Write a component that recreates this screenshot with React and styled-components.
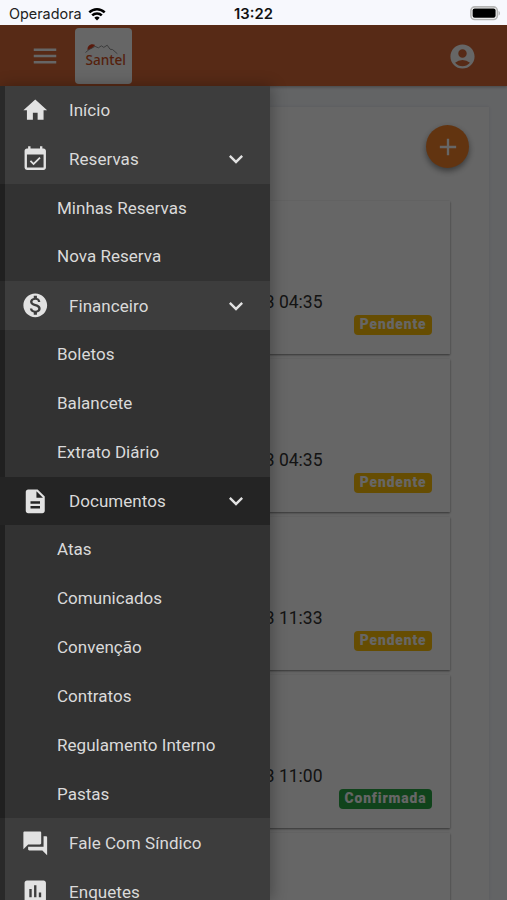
import {Fragment, useState} from "react";
import styled, {createGlobalStyle} from "styled-components";
import {
    MdAccountCircle,
    MdAdd,
    MdAssessment,
    MdDescription,
    MdEventAvailable,
    MdExpandMore,
    MdForum,
    MdHome,
    MdMenu,
    MdMonetizationOn,
} from "react-icons/md";

const menu = [
    {label: "Início", icon: MdHome},
    {label: "Reservas", icon: MdEventAvailable, children: ["Minhas Reservas", "Nova Reserva"]},
    {label: "Financeiro", icon: MdMonetizationOn, children: ["Boletos", "Balancete", "Extrato Diário"]},
    {
        label: "Documentos",
        icon: MdDescription,
        children: ["Atas", "Comunicados", "Convenção", "Contratos", "Regulamento Interno", "Pastas"],
    },
    {label: "Fale Com Síndico", icon: MdForum},
    {label: "Enquetes", icon: MdAssessment},
];

const bookings = [
    {date: "3 04:35", status: "Pendente"},
    {date: "3 04:35", status: "Pendente"},
    {date: "3 11:33", status: "Pendente"},
    {date: "3 11:00", status: "Confirmada"},
];

const StatusBar = () => (
    <StyledStatusBar>
        <Carrier>
            Operadora
            <svg width="18" height="14" viewBox="0 0 18 14">
                <path d="M1.3 5.3a11 11 0 0 1 15.4 0M4.2 8.4a6.8 6.8 0 0 1 9.6 0" fill="none" stroke="#000" strokeWidth="2.5"/>
                <path d="M9 13.4 6.3 10.7a3.9 3.9 0 0 1 5.4 0z"/>
            </svg>
        </Carrier>
        <Clock>13:22</Clock>
        <Battery>
            <svg width="31" height="15" viewBox="0 0 31 15">
                <rect x="0.9" y="0.9" width="26.4" height="12.6" rx="3.8" fill="#fff" stroke="#b5b5b5" strokeWidth="1.6"/>
                <rect x="2.6" y="2.6" width="23" height="9.2" rx="2" fill="#000"/>
                <path d="M28.6 5v4.6c1.8-.7 1.8-3.9 0-4.6z" fill="#b5b5b5"/>
            </svg>
        </Battery>
    </StyledStatusBar>
);

const Logo = () => (
    <LogoBox>
        <svg width="42" height="34" viewBox="0 -2 42 34">
            <path d="M2.6 9.2C1.8 5 6 1.8 10.2 4L7.4 7z" fill="#e0401c"/>
            <path d="M.5 11.5 4 8.6l6-3.2 3.4 1.4 3-2 2.4 1.6 3.4-2.2 2.8 4 2.6.4 4.8 4.2" fill="none" stroke="#8a8a8a" strokeWidth="0.9"/>
            <text x="0.5" y="23.6" fontFamily="Noto Sans, sans-serif" fontSize="15" fontWeight="500" fill="#d4521e" textLength="40.5" lengthAdjust="spacingAndGlyphs">Santel</text>
        </svg>
    </LogoBox>
);

export default function App() {
    const [active, setActive] = useState("Documentos");

    return (
        <Page>
            <GlobalStyle/>
            <StatusBar/>
            <Shell>
                <Header>
                    <IconButton><MdMenu size={30}/></IconButton>
                    <Logo/>
                    <Account><MdAccountCircle size={29}/></Account>
                </Header>
                <Content>
                    <Panel>
                        <Actions>
                            <AddButton><MdAdd size={28}/></AddButton>
                        </Actions>
                        {bookings.map((item, i) => (
                            <Booking key={i}>
                                <BookingDate>{item.date}</BookingDate>
                                <Badge $done={item.status === "Confirmada"}>{item.status}</Badge>
                            </Booking>
                        ))}
                        <Booking/>
                    </Panel>
                </Content>
                <Backdrop/>
                <Drawer>
                    {menu.map(({label, icon: Icon, children}) => (
                        <Fragment key={label}>
                            <MenuItem $active={label === active} onClick={() => setActive(label)}>
                                <MenuIcon><Icon size={28.5}/></MenuIcon>
                                <MenuLabel>{label}</MenuLabel>
                                {children && <MdExpandMore size={28}/>}
                            </MenuItem>
                            {children && children.map((child) => <SubItem key={child}>{child}</SubItem>)}
                        </Fragment>
                    ))}
                </Drawer>
            </Shell>
        </Page>
    );
}

const GlobalStyle = createGlobalStyle`
  * {
    box-sizing: border-box;
  }

  body {
    margin: 0;
    overflow: hidden;
    font-family: Roboto, sans-serif;
  }
`;

const Page = styled.div`
  display: flex;
  flex-direction: column;
  height: 900px;
  overflow: hidden;
`;

// 상단 상태 표시줄
const StyledStatusBar = styled.div`
  display: grid;
  grid-template-columns: 1fr auto 1fr;
  align-items: center;
  height: 25px;
  padding: 2px 6px 0 9px;
  background-color: #f7f8fd;
  color: #222;
  font-family: Inter, sans-serif;
  font-size: 14.4px;
`;

const Carrier = styled.div`
  display: flex;
  align-items: center;
  gap: 6px;
`;

const Clock = styled.div`
  padding-right: 3px;
  font-weight: 600;
  font-size: 14.8px;
  color: #111;
`;

const Battery = styled.div`
  display: flex;
  justify-content: flex-end;
`;

const Shell = styled.div`
  position: relative;
  flex: 1;
  display: flex;
  flex-direction: column;
  min-height: 0;
  overflow: hidden;
`;

const Header = styled.header`
  display: flex;
  align-items: center;
  flex: none;
  height: 61px;
  padding: 1px 30px 0;
  background-color: #d96937;
  color: #fff;
  z-index: 1;
  box-shadow: 0 1px 3px rgba(0, 0, 0, 0.3);
`;

const IconButton = styled.button`
  display: flex;
  padding: 0;
  margin-right: 15px;
  border: none;
  background: none;
  color: #fff;
`;

const Account = styled(IconButton)`
  margin: 0 0 0 auto;
`;

const LogoBox = styled.div`
  display: flex;
  align-items: center;
  justify-content: center;
  width: 57px;
  height: 56px;
  padding-left: 4px;
  border-radius: 4px;
  background-color: #fff;
`;

const Content = styled.main`
  flex: 1;
  min-height: 0;
  padding: 21px 18px 0;
  background-color: #f7f9fd;
`;

const Panel = styled.section`
  height: 100%;
  padding: 18px 39px 0;
  background-color: #fff;
  box-shadow: 0 0 3px rgba(0, 0, 0, 0.1);
`;

const Actions = styled.div`
  display: flex;
  justify-content: flex-end;
  height: 76px;
  margin-right: -19px;
`;

const AddButton = styled.button`
  display: flex;
  align-items: center;
  justify-content: center;
  width: 43px;
  height: 43px;
  padding: 0;
  border: none;
  border-radius: 50%;
  background-color: #f5822a;
  color: #fff;
  box-shadow: 0 3px 6px rgba(0, 0, 0, 0.45);
`;

const Booking = styled.article`
  display: flex;
  flex-direction: column;
  justify-content: flex-end;
  align-items: flex-end;
  height: 153px;
  margin-bottom: 5px;
  padding: 0 18.5px 19px;
  background-color: #fff;
  box-shadow: 0 1px 2px rgba(0, 0, 0, 0.5);
`;

const BookingDate = styled.div`
  padding-right: 109px;
  margin-bottom: 2px;
  font-size: 17.5px;
  line-height: 22px;
  color: #333;
`;

const Badge = styled.span`
  height: 20px;
  padding: 0 5px 0 5.5px;
  border-radius: 4px;
  background-color: ${(props) => (props.$done ? "#28a745" : "#ffc107")};
  color: #fff;
  font-size: 13.8px;
  font-weight: 900;
  line-height: 19px;
  letter-spacing: 0.9px;
`;

const Backdrop = styled.div`
  position: absolute;
  inset: 0;
  z-index: 2;
  background-color: rgba(0, 0, 0, 0.6);
`;

// 왼쪽 메뉴
const Drawer = styled.nav`
  position: absolute;
  top: 61px;
  left: 0;
  bottom: 0;
  z-index: 3;
  width: 269.5px;
  overflow: hidden;
  background-color: #3d3d3d;
  color: #dadada;
  box-shadow: 2px 0 14px rgba(0, 0, 0, 0.3);
`;

const MenuItem = styled.div`
  display: flex;
  align-items: center;
  height: 48.83px;
  padding: 0 20px 0 16px;
  border-left: 5px solid ${(props) => (props.$active ? "#242424" : "#292929")};
  background-color: ${(props) => (props.$active ? "#242424" : "#3d3d3d")};
  font-size: 17px;
  cursor: pointer;

  svg {
    flex: none;
    color: #e2e2e2;
  }
`;

const MenuIcon = styled.span`
  display: flex;
  width: 48px;
`;

const MenuLabel = styled.span`
  flex: 1;
  letter-spacing: 0.05px;
`;

const SubItem = styled.div`
  height: 48.83px;
  padding-left: 52px;
  border-left: 5px solid #202020;
  background-color: #323232;
  font-size: 17px;
  line-height: 48px;
  letter-spacing: 0.03px;
  cursor: pointer;
`;
